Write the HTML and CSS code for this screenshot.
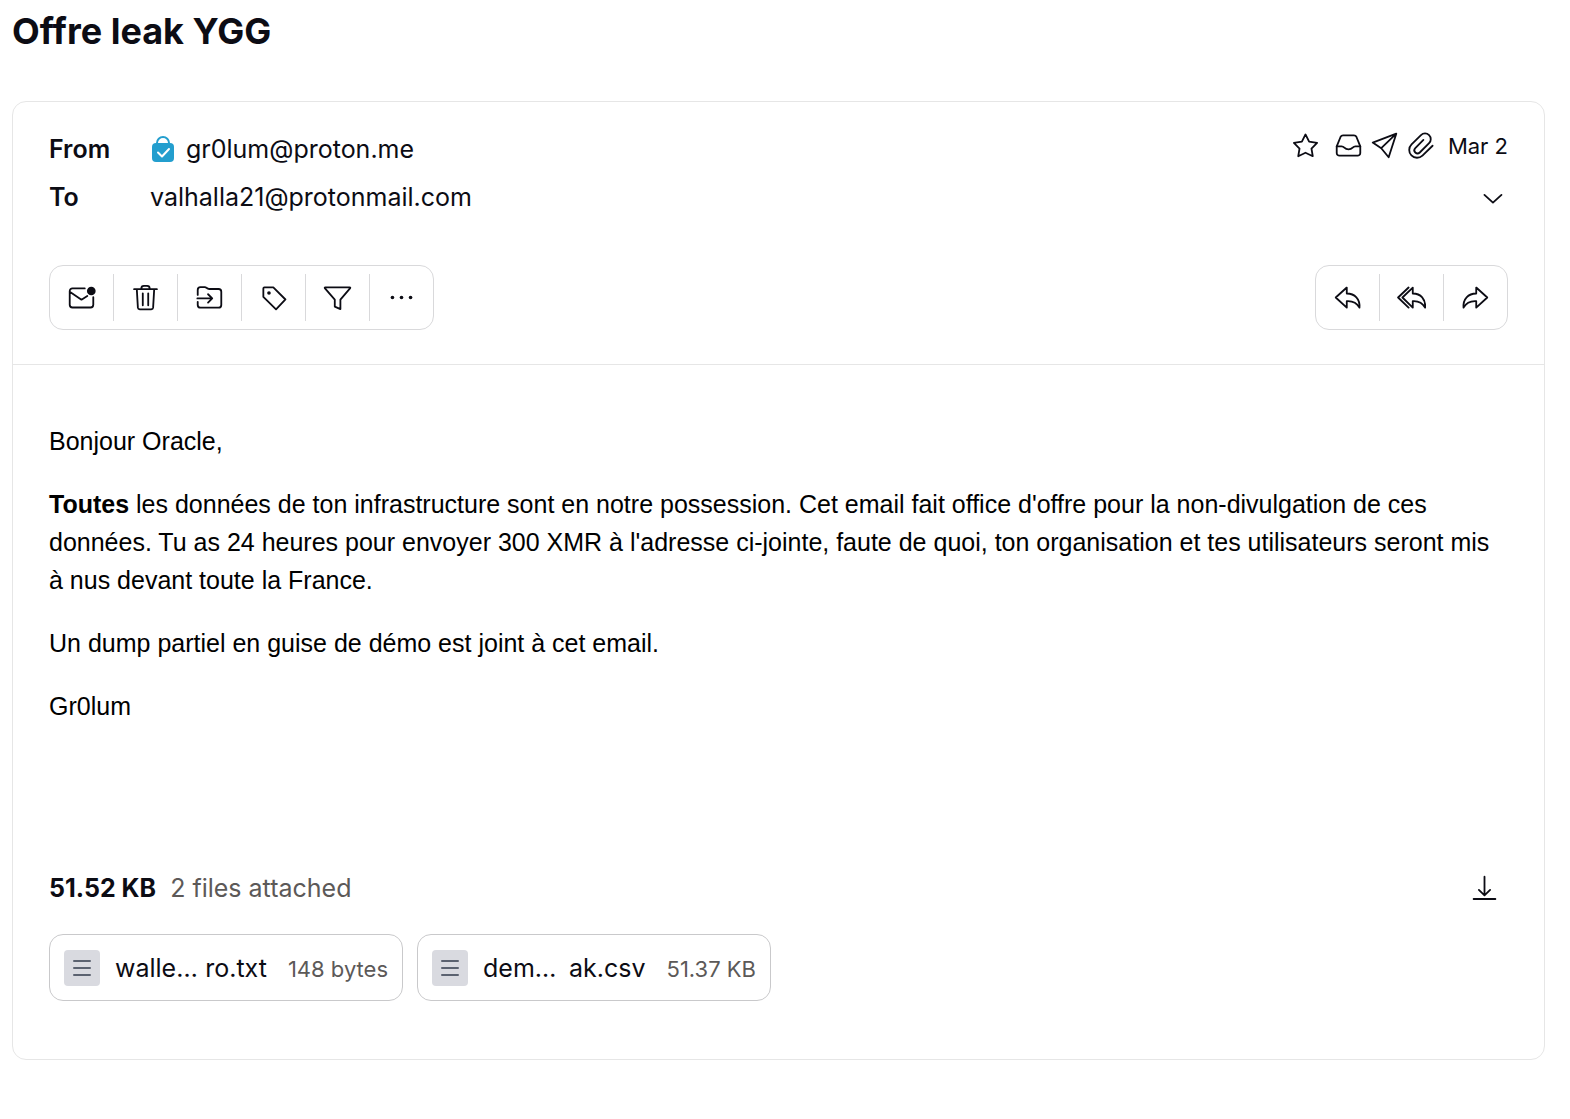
FILE: index.html
```html
<!DOCTYPE html>
<html lang="fr">
<head>
<meta charset="utf-8">
<meta name="viewport" content="width=device-width, initial-scale=1">
<title>Offre leak YGG</title>
<link rel="stylesheet" href="styles.css">
</head>
<body>
<main class="conversation">
  <h1 class="subject">Offre leak YGG</h1>

  <article class="message">
    <header class="message-header">
      <div class="meta">
        <dl class="recipients">
          <dt>From</dt>
          <dd class="sender">
            <svg class="lock" viewBox="0 0 22 26" aria-hidden="true"><path class="shackle" d="M5 9V7a6 6 0 0 1 12 0v2"/><rect class="lock-body" y="7" width="22" height="19" rx="4"/><path class="lock-check" d="M6 16.500l4 4 7-7.500"/></svg>
            <span>gr0lum@proton.me</span>
          </dd>
          <dt>To</dt>
          <dd>valhalla21@protonmail.com</dd>
        </dl>
        <div class="status">
          <div class="status-row">
            <button class="plain star" type="button" aria-label="Star"><svg class="icon" viewBox="0 0 16 16"><path d="M8 1.900 10 5.900l4.400.7-3.100 3.100.7 4.200-4-1.900-4 1.900.7-4.200-3.100-3.100 4.400-.7z"/></svg></button>
            <svg class="icon" viewBox="0 0 16 16" role="img" aria-label="Inbox"><path d="M1.500 8.500 3.600 3.300Q4 2.400 5 2.400h6q1 0 1.400.9l2.100 5.200v3.600a1.500 1.500 0 0 1-1.500 1.500H3a1.500 1.500 0 0 1-1.500-1.500z"/><path d="M1.500 8.500h2.700c.7 0 1 .2 1.500.7.600.6 1.200.9 2.300.9s1.700-.3 2.300-.9c.5-.5.8-.7 1.500-.7h2.700"/></svg>
            <svg class="icon" viewBox="0 0 16 16" role="img" aria-label="Sent"><path d="M14.500 1.500 1.500 6.400l4.700 3.100 4.100 5zL6.200 9.500"/></svg>
            <svg class="icon" viewBox="0 0 24 24" role="img" aria-label="Has attachments"><path class="clip" d="M22 12.200l-8.400 8.100a6.400 6.400 0 0 1-9-9.200l7.800-7.700a4.700 4.700 0 0 1 6.700 6.700l-7.700 7.700a2.600 2.600 0 0 1-3.700-3.700l6.700-6.700"/></svg>
            <time class="date">Mar 2</time>
          </div>
          <button class="plain" type="button" aria-label="Show details"><svg class="icon" viewBox="0 0 16 16"><path d="M3 6 7.700 10.300 12.400 6"/></svg></button>
        </div>
      </div>

      <div class="toolbars">
        <div class="toolbar" role="toolbar" aria-label="Message actions">
          <button type="button" aria-label="Mark as unread"><svg class="icon" viewBox="0 0 16 16"><path d="M9.800 3H3a1.500 1.500 0 0 0-1.500 1.500v7.500A1.500 1.500 0 0 0 3 13.500h10a1.500 1.500 0 0 0 1.500-1.500V7.800M1.700 5 8 9.200l3.200-2"/><circle class="solid" cx="13.400" cy="4.400" r="2.400"/></svg></button>
          <button type="button" aria-label="Move to trash"><svg class="icon" viewBox="0 0 16 16"><path d="M1.700 3.400h12.600M5.700 3.400V3q0-1.400 1.400-1.400h1.800q1.400 0 1.400 1.400v.4M3.200 3.400l.6 10.200q.1.900 1 .9h6.400q.9 0 1-.9l.6-10.200M6.500 5.700v6.600M9.500 5.700v6.600"/></svg></button>
          <button type="button" aria-label="Move to folder"><svg class="icon" viewBox="0 0 16 16"><path d="M1.500 6.600V3.800q0-1.500 1.500-1.500h2.400q.5 0 .9.300l.8.500q.3.200.8.200H13q1.500 0 1.500 1.500v7.300q0 1.500-1.500 1.500H3q-1.500 0-1.500-1.500v-1.700M1.300 8.500h8M7.200 6.200l2.300 2.300-2.300 2.300"/></svg></button>
          <button type="button" aria-label="Label as"><svg class="icon" viewBox="0 0 16 16"><path d="M3 2.400h4.900l6.700 6.700-5.200 5.400-7-6.800V3q0-.6.6-.6z"/><circle class="solid" cx="5.500" cy="5.500" r="1"/></svg></button>
          <button type="button" aria-label="Filter on"><svg class="icon" viewBox="0 0 16 16"><path d="M1.300 2.400h13.400q.6 0 .2.600L9.600 9.200v5.200L6.500 13V9.200L1.100 3q-.4-.6.2-.6z"/></svg></button>
          <button type="button" aria-label="More"><svg class="icon" viewBox="0 0 16 16"><g class="solid"><circle cx="3" cy="8" r="1"/><circle cx="8" cy="8" r="1"/><circle cx="13" cy="8" r="1"/></g></svg></button>
        </div>
        <div class="toolbar" role="toolbar" aria-label="Reply actions">
          <button type="button" aria-label="Reply"><svg class="icon" viewBox="0 0 16 16"><path d="M7.600 2.500 1.500 8l6.100 5.600V10c3.200-.2 5.600 1 7 3.600C15 8.800 12 5.800 7.600 5.800z"/></svg></button>
          <button type="button" aria-label="Reply all"><svg class="icon" viewBox="0 0 16 16"><path d="M8.700 2.500 3 8l5.700 5.600V10c3.200-.2 5.400 1 6.800 3.600.4-4.800-2.400-7.800-6.800-7.800zM6.400 2.500.6 8l5.800 5.600"/></svg></button>
          <button type="button" aria-label="Forward"><svg class="icon" viewBox="0 0 16 16"><path d="M8.400 2.500 14.500 8l-6.100 5.600V10c-3.200-.2-5.600 1-7 3.600C1 8.800 4 5.800 8.400 5.800z"/></svg></button>
        </div>
      </div>
    </header>

    <div class="message-body">
      <p>Bonjour Oracle,</p>
      <p><strong>Toutes</strong> les données de ton infrastructure sont en notre possession. Cet email fait office d'offre pour la non-divulgation de ces données. Tu as 24 heures pour envoyer 300 XMR à l'adresse ci-jointe, faute de quoi, ton organisation et tes utilisateurs seront mis à nus devant toute la France.</p>
      <p>Un dump partiel en guise de démo est joint à cet email.</p>
      <p>Gr0lum</p>
    </div>

    <footer class="attachments">
      <div class="attachments-summary">
        <strong>51.52 KB</strong>
        <span class="count">2 files attached</span>
        <button class="plain download" type="button" aria-label="Download all"><svg class="icon" viewBox="0 0 16 16"><path d="M8 1.500v10.200M4.900 8.800 8 11.800l3.100-3M2 13.800h12"/></svg></button>
      </div>
      <div class="files">
        <button class="file" type="button">
          <svg class="file-icon" viewBox="0 0 36 36" aria-hidden="true"><path d="M10 11h16M10 18h16M10 25h16"/></svg>
          <span class="file-text"><span>walle…</span><span class="name-end">ro.txt</span><span class="size">148 bytes</span></span>
        </button>
        <button class="file" type="button">
          <svg class="file-icon" viewBox="0 0 36 36" aria-hidden="true"><path d="M10 11h16M10 18h16M10 25h16"/></svg>
          <span class="file-text"><span>dem…</span><span class="name-end">ak.csv</span><span class="size">51.37 KB</span></span>
        </button>
      </div>
    </footer>
  </article>
</main>
</body>
</html>
```

FILE: styles.css
```css
* {
  box-sizing: border-box;
}

body {
  margin: 0;
  background: #fff;
  color: #0c0c14;
  font: 25px/38px Inter, "Liberation Sans", sans-serif;
}

button {
  margin: 0;
  padding: 0;
  border: 0;
  background: none;
  color: inherit;
  font: inherit;
  cursor: pointer;
}

.conversation {
  padding: 7px 25px 58px 12px;
}

.subject {
  margin: 0 0 46px;
  font-size: 36px;
  line-height: 48px;
  font-weight: 700;
}

.message {
  border: 1px solid #e6e6e6;
  border-radius: 14px;
}

.message-header {
  padding: 23px 36px 34px;
  border-bottom: 1px solid #e6e6e6;
}

.meta,
.toolbars {
  display: flex;
  justify-content: space-between;
}

.recipients {
  display: grid;
  grid-template-columns: 101px auto;
  grid-auto-rows: 48px;
  align-items: center;
  margin: 0;
}

.recipients dt {
  font-weight: 600;
}

.recipients dd {
  margin: 0;
}

.sender {
  display: flex;
  align-items: center;
  gap: 12px;
  padding-left: 2px;
}

.lock {
  width: 22px;
  height: 26px;
}

.lock-body {
  fill: #239ece;
}

.shackle,
.lock-check {
  fill: none;
  stroke: #239ece;
  stroke-width: 2;
}

.lock-check {
  stroke: #fff;
  stroke-linecap: round;
  stroke-linejoin: round;
}

.status {
  display: flex;
  flex-direction: column;
  align-items: flex-end;
  gap: 18px;
}

.status-row {
  display: flex;
  align-items: center;
  gap: 7px;
  height: 41px;
}

.star {
  margin-right: 7px;
}

.date {
  margin-left: 6px;
  font-size: 22px;
}

.plain {
  display: flex;
}

.icon {
  display: block;
  width: 29px;
  height: 29px;
  fill: none;
  stroke: currentColor;
  stroke-width: 1;
  stroke-linecap: round;
  stroke-linejoin: round;
}

.icon .solid {
  fill: currentColor;
  stroke: none;
}

.icon .clip {
  stroke-width: 1.5;
}

.toolbars {
  margin-top: 44px;
}

.toolbar {
  display: flex;
  border: 1px solid #d9d9db;
  border-radius: 14px;
}

.toolbar button {
  display: grid;
  place-items: center;
  width: 63px;
  height: 63px;
}

.toolbar button + button {
  width: 64px;
  border-left: 1px solid;
  border-image: linear-gradient(transparent 9px, #d9d9db 9px 54px, transparent 54px) 1;
}

.message-body {
  padding: 57px 36px 0;
  color: #000;
  font-family: "Liberation Sans", Arial, sans-serif;
}

.message-body p {
  margin: 0 0 25px;
}

.attachments {
  padding: 119px 36px 58px;
}

.attachments-summary {
  display: flex;
  align-items: center;
  gap: 14px;
}

.attachments-summary strong {
  font-weight: 700;
}

.count,
.size {
  color: #5c5958;
}

.download {
  margin: 0 9px 0 auto;
}

.files {
  display: flex;
  flex-wrap: wrap;
  gap: 14px;
  margin-top: 27px;
}

.file {
  display: flex;
  align-items: center;
  gap: 15px;
  width: 354px;
  height: 67px;
  padding: 0 14px;
  border: 1px solid #c9c9cb;
  border-radius: 14px;
}

.file-icon {
  width: 36px;
  height: 36px;
  border-radius: 4px;
  background: #d9dae0;
  fill: none;
  stroke: #5b6270;
  stroke-width: 2;
  stroke-linecap: round;
}

.file-text {
  display: flex;
  flex: 1;
  align-items: baseline;
  padding-top: 2px;
}

.name-end {
  margin-left: auto;
}

.size {
  margin-left: 21px;
  font-size: 22px;
}
```
